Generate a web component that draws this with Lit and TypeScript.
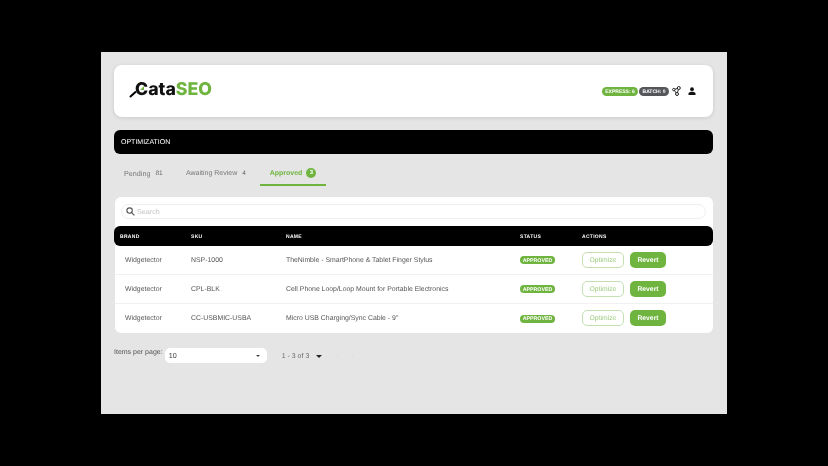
import { LitElement, html, css } from "lit";
import { customElement } from "lit/decorators.js";

const rows = [
  ["Widgetector", "NSP-1000", "TheNimble - SmartPhone & Tablet Finger Stylus"],
  ["Widgetector", "CPL-BLK", "Cell Phone Loop/Loop Mount for Portable Electronics"],
  ["Widgetector", "CC-USBMIC-USBA", "Micro USB Charging/Sync Cable - 9\""],
];

@customElement("app-root")
export class AppRoot extends LitElement {
  static styles = css`
    :host { display: block; width: 828px; height: 466px; background: #000; overflow: hidden; text-rendering: geometricPrecision;
      font-family: "Liberation Sans", Arial, sans-serif; box-sizing: border-box; padding: 52px 101px; }
    * { box-sizing: border-box; }
    .screen { width: 626px; height: 362px; background: #e5e5e5; padding: 13px 14px 0 13px; display: flex; flex-direction: column; filter: blur(0.25px); }
    .head { height: 52px; background: #fff; border-radius: 8px; box-shadow: 0 1px 4px rgba(0,0,0,.12);
      display: flex; align-items: center; justify-content: space-between; padding: 0 17px 0 15px; }
    .logo { position: relative; display: flex; align-items: center; height: 22px; padding-left: 6px; margin-top: -4px;
      font-family: Inter, sans-serif; font-weight: 800; font-size: 17.7px; color: #111; }
    .logo b { color: #6eb43f; font-weight: 800; }
    .mag { position: absolute; left: 0; top: 3.5px; }
    .tri { position: absolute; left: 10px; top: 7px; }
    .tools { display: flex; align-items: center; }
    .pill { height: 9px; padding-top: 1px; border-radius: 5px; font-size: 5px; font-weight: 700; color: #fff;
      display: flex; align-items: center; justify-content: center; white-space: nowrap; }
    .pill.g { background: #6eb43f; width: 36px; }
    .pill.d { background: #55565a; width: 30px; margin-left: 1px; }
    .ic1 { margin-left: 3px; }
    .ic2 { margin-left: 7px; }
    .title { margin-top: 13px; height: 24px; padding: 1px 0 0 7px; background: #000; color: #fff; border-radius: 6px; font-size: 7px;
      display: flex; align-items: center; }
    .tabs { display: flex; height: 32px; font-size: 7.2px; color: #777; }
    .tab { display: flex; align-items: center; padding-top: 6px; white-space: nowrap; gap: 5px; }
    .tab small { font-size: 6.5px; color: #666; margin-top: 1px; }
    .t1 { margin-left: 10px; width: 62px; }
    .t2 { width: 74px; font-size: 7px; }
    .t3 { width: 66px; padding-top: 8px; justify-content: center; color: #6eb43f; font-weight: 700; font-size: 7px; border-bottom: 2px solid #6eb43f; gap: 4px; }
    .badge { width: 10px; height: 10px; margin-top: -1px; padding-top: 1px; border-radius: 50%; background: #6eb43f; color: #fff; font-size: 6px;
      display: flex; align-items: center; justify-content: center; }
    .card { margin: 11px 0 0 1px; height: 136px; background: #fff; border-radius: 6px; display: flex; flex-direction: column; }
    .search { margin: 7px 7px 0 6px; height: 15px; border: 1px solid #eee; border-radius: 8px; display: flex; align-items: center;
      padding-left: 4px; gap: 2px; font-size: 7.2px; color: #c4c4c4; }
    .r { display: grid; align-items: center; }
    .thead { margin: 7px 0 0 -1px; height: 20px; padding: 1px 0 0 6px; background: #000; color: #fff; border-radius: 6px;
      font-size: 5px; font-weight: 700; letter-spacing: .3px; grid-template-columns: 71px 95px 234px 62px 1fr; }
    .row { height: 29px; padding: 0 0 0 10px; grid-template-columns: 66px 95px 234px 62px 1fr; font-size: 6.9px; color: #555; border-bottom: 1px solid #f1f1f1; }
    .row:last-child { border-bottom: 0; }
    .status { display: inline-flex; align-items: center; justify-content: center; width: 35px; height: 8px; padding-top: 1px; border-radius: 4px; background: #6eb43f; color: #fff;
      font-size: 5.3px; font-weight: 700; }
    .acts { display: flex; gap: 6px; margin-top: -1px; }
    .btn { width: 42px; height: 16px; padding-top: 1px; border-radius: 5px; font-size: 6.8px; display: flex; align-items: center; justify-content: center; }
    .opt { border: 1px solid #c4dfb2; color: #9cca7e; background: #fff; }
    .rev { width: 36px; background: #6eb43f; color: #fff; font-weight: 700; }
    .pager { display: flex; align-items: flex-start; margin-top: 15px; font-size: 7px; color: #555; }
    .lbl { margin-top: 1px; }
    .sel { width: 102px; height: 15px; margin-left: 2px; background: #fff; border-radius: 5px; display: flex; align-items: center;
      justify-content: space-between; padding: 0 7px 0 4px; font-size: 7.2px; color: #444; }
    .caret { width: 0; height: 0; border: 2.5px solid transparent; border-top-color: #444; border-bottom: 0; }
    .range { margin-left: 15px; height: 15px; padding-top: 1px; display: flex; align-items: center; font-size: 7px; color: #666; gap: 7px; }
    .range .caret { border-width: 3px; border-bottom: 0; border-top-color: #222; }
    .chev { margin-left: 13px; height: 15px; display: flex; gap: 11px; align-items: center; }
  `;

  render() {
    return html`<div class="screen">
      <div class="head">
        <div class="logo">
          <svg class="mag" width="14" height="16" viewBox="0 0 14 16" fill="none">
            <path d="M1.5 14.5 L6.5 10" stroke="#000" stroke-width="2" stroke-linecap="round"/>
          </svg>
          <span>Cata<b>SEO</b></span>
          <svg class="tri" width="6" height="6" viewBox="0 0 6 6"><path d="M1 5 L5 1 L5 5 Z" fill="#6eb43f"/></svg>
        </div>
        <div class="tools">
          <div class="pill g">EXPRESS: 6</div>
          <div class="pill d">BATCH: 0</div>
          <svg class="ic1" width="9" height="10" viewBox="0 0 9 10" fill="none" stroke="#222" stroke-width="1">
            <circle cx="1.8" cy="3.6" r="1.2"/><circle cx="6.8" cy="2" r="1.5"/><circle cx="5" cy="8" r="1.5"/>
            <path d="M3 3.2 L5.3 2.5 M2.6 4.6 L4 6.8 M6.3 3.5 L5.5 6.5"/>
          </svg>
          <svg class="ic2" width="8" height="8" viewBox="0 0 8 8" fill="#111">
            <circle cx="4" cy="2.2" r="1.9"/><path d="M.5 8 V6.6 C.5 5.2 2.5 4.8 4 4.8 S7.5 5.2 7.5 6.6 V8 Z"/>
          </svg>
        </div>
      </div>
      <div class="title">OPTIMIZATION</div>
      <div class="tabs">
        <div class="tab t1">Pending <small>81</small></div>
        <div class="tab t2">Awaiting Review <small>4</small></div>
        <div class="tab t3">Approved <span class="badge">3</span></div>
      </div>
      <div class="card">
        <div class="search">
          <svg width="9" height="9" viewBox="0 0 9 9" fill="none" stroke="#555" stroke-width="1.1">
            <circle cx="3.6" cy="3.6" r="2.7"/><path d="M5.6 5.6 L8.4 8.4"/>
          </svg>
          Search
        </div>
        <div class="thead r">
          <span>BRAND</span><span>SKU</span><span>NAME</span><span>STATUS</span><span>ACTIONS</span>
        </div>
        ${rows.map(
          (r) => html`<div class="row r">
            <span>${r[0]}</span><span>${r[1]}</span><span>${r[2]}</span>
            <span><span class="status">APPROVED</span></span>
            <span class="acts"><span class="btn opt">Optimize</span><span class="btn rev">Revert</span></span>
          </div>`
        )}
      </div>
      <div class="pager">
        <span class="lbl">Items per page:</span>
        <div class="sel">10 <span class="caret"></span></div>
        <div class="range">1 - 3 of 3 <span class="caret"></span></div>
        <div class="chev">
          <svg width="5" height="7" viewBox="0 0 5 7" fill="none" stroke="#ddd" stroke-width="1"><path d="M4 1 L1.5 3.5 L4 6"/></svg>
          <svg width="5" height="7" viewBox="0 0 5 7" fill="none" stroke="#ddd" stroke-width="1"><path d="M1 1 L3.5 3.5 L1 6"/></svg>
        </div>
      </div>
    </div>`;
  }
}
